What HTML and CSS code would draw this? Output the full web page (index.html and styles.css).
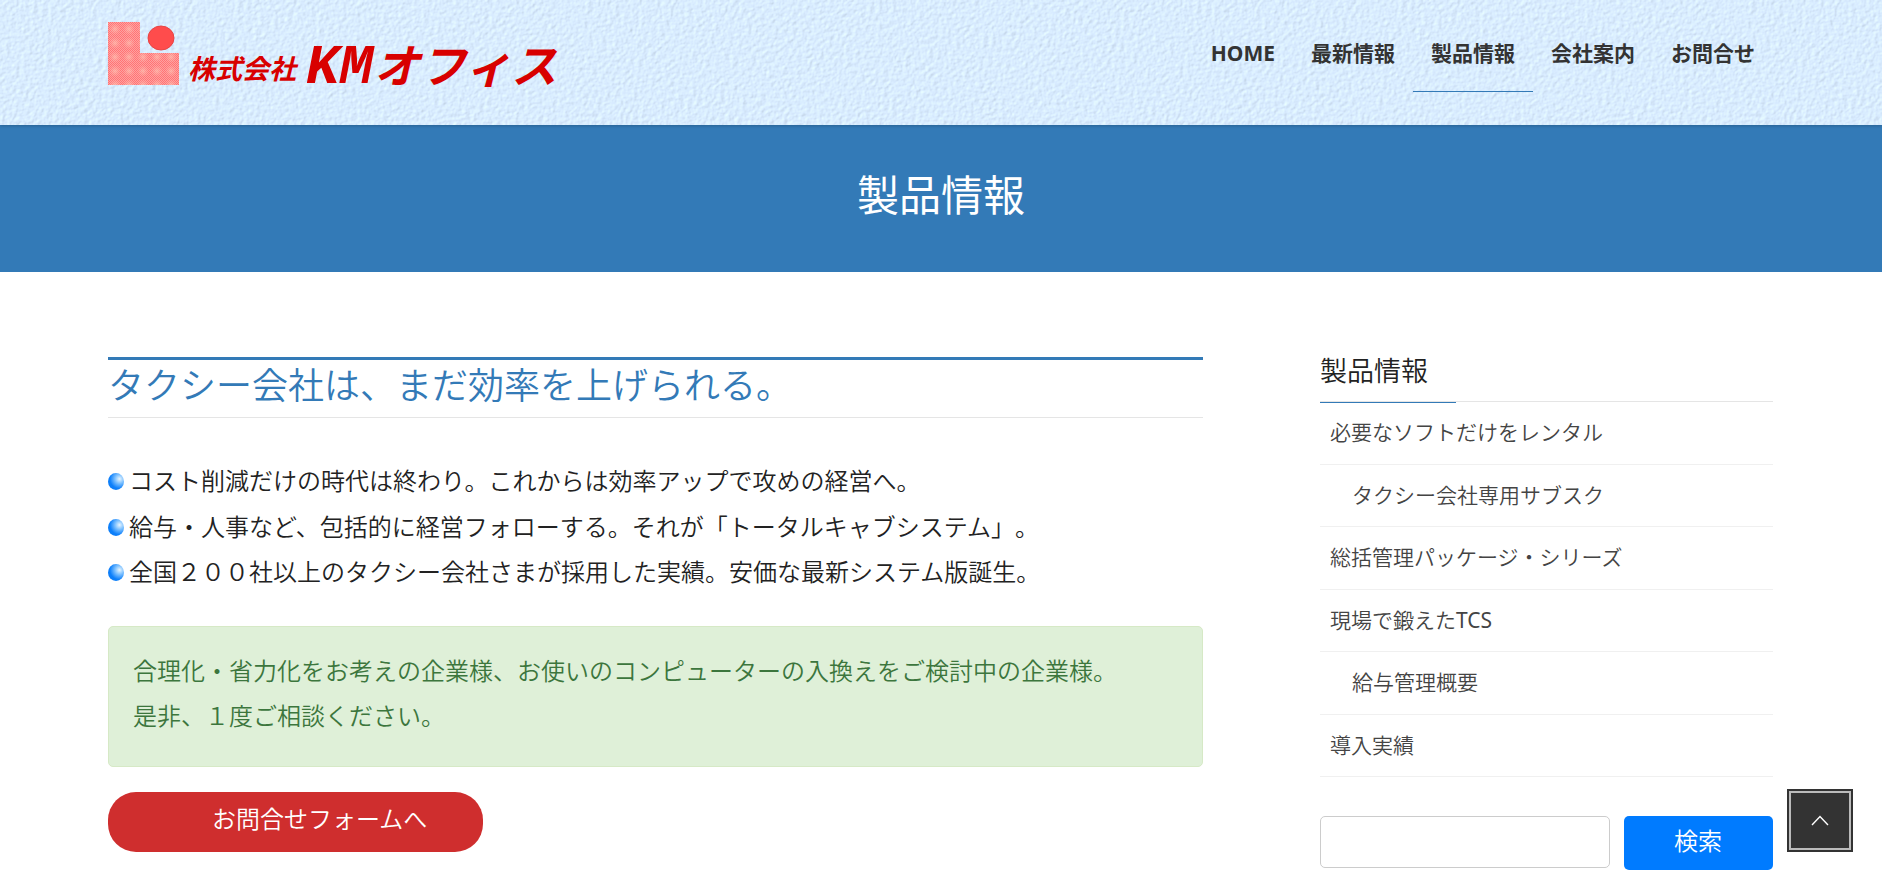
FILE: index.html
```html
<!DOCTYPE html>
<html lang="ja">
<head>
<meta charset="utf-8">
<meta name="viewport" content="width=device-width, initial-scale=1">
<title>製品情報 | 株式会社KMオフィス</title>
<link rel="stylesheet" href="styles.css">
</head>
<body>
<header class="site-header">
  <svg class="texture" aria-hidden="true">
    <filter id="paper" x="0" y="0" width="100%" height="100%" color-interpolation-filters="sRGB">
      <feTurbulence type="fractalNoise" baseFrequency="0.22 0.26" numOctaves="3" seed="4" result="n"/>
      <feDiffuseLighting in="n" surfaceScale="0.36" diffuseConstant="1.15" lighting-color="#d6e9fd">
        <feDistantLight azimuth="215" elevation="62"/>
      </feDiffuseLighting>
    </filter>
    <rect width="100%" height="100%" filter="url(#paper)"/>
  </svg>
  <a class="brand" href="#" aria-label="株式会社KMオフィス">
    <svg class="logo" viewBox="0 0 452 66" width="452" height="66">
      <defs>
        <pattern id="dots" width="2" height="2" patternUnits="userSpaceOnUse">
          <rect width="2" height="2" fill="#ffa0a0"/>
          <rect width="1" height="1" fill="#ff7474"/>
          <rect x="1" y="1" width="1" height="1" fill="#ff7474"/>
        </pattern>
        <radialGradient id="spot">
          <stop offset="0" stop-color="#ffc4b4" stop-opacity="0.7"/>
          <stop offset="1" stop-color="#ffb0a8" stop-opacity="0"/>
        </radialGradient>
        <pattern id="glow" width="14" height="14" patternUnits="userSpaceOnUse">
          <circle cx="7" cy="7" r="6" fill="url(#spot)"/>
        </pattern>
      </defs>
      <path d="M0 0H32V31H71V63H0Z" fill="url(#dots)"/>
      <path d="M0 0H32V31H71V63H0Z" fill="url(#glow)"/>
      <ellipse cx="53" cy="16" rx="13" ry="12" fill="#ff4c4c" stroke="#e84444" stroke-width="1"/>
      <text class="logo-small" x="80" y="57">株式会社</text>
      <text class="logo-latin" x="198" y="61">KM</text>
      <text class="logo-kana" x="266" y="61">オフィス</text>
    </svg>
  </a>
  <nav class="nav">
    <a href="#">HOME</a>
    <a href="#">最新情報</a>
    <a class="current" href="#">製品情報</a>
    <a href="#">会社案内</a>
    <a href="#">お問合せ</a>
  </nav>
</header>
<div class="banner"><h1>製品情報</h1></div>
<div class="content">
  <main>
    <h2 class="lead">タクシー会社は、まだ効率を上げられる。</h2>
    <ul class="points">
      <li>コスト削減だけの時代は終わり。これからは効率アップで攻めの経営へ。</li>
      <li>給与・人事など、包括的に経営フォローする。それが「トータルキャブシステム」。</li>
      <li>全国２００社以上のタクシー会社さまが採用した実績。安価な最新システム版誕生。</li>
    </ul>
    <p class="notice">合理化・省力化をお考えの企業様、お使いのコンピューターの入換えをご検討中の企業様。<br>是非、１度ご相談ください。</p>
    <a class="cta" href="#">お問合せフォームへ</a>
  </main>
  <aside>
    <h2 class="side-title"><span>製品情報</span></h2>
    <ul class="side-list">
      <li><a href="#">必要なソフトだけをレンタル</a></li>
      <li class="child"><a href="#">タクシー会社専用サブスク</a></li>
      <li><a href="#">総括管理パッケージ・シリーズ</a></li>
      <li><a href="#">現場で鍛えた<span class="latin">TCS</span></a></li>
      <li class="child"><a href="#">給与管理概要</a></li>
      <li><a href="#">導入実績</a></li>
    </ul>
    <form class="search">
      <input type="text" aria-label="検索キーワード">
      <button type="submit">検索</button>
    </form>
  </aside>
</div>
<a class="page-top" href="#" aria-label="ページの先頭へ">
  <svg viewBox="0 0 18 11" width="18" height="11"><path d="M1 10 9 1.500 17 10" fill="none" stroke="#fff" stroke-width="1.400"/></svg>
</a>
</body>
</html>
```

FILE: styles.css
```css
* { box-sizing: border-box; }

body {
  margin: 0;
  background: #fff;
  color: #222;
  font-family: "Noto Sans", "Noto Sans CJK JP", sans-serif;
  font-weight: 350;
  font-size: 24px;
  line-height: 1.9;
  text-spacing-trim: space-all;
}

h1, h2, p, ul { margin: 0; padding: 0; font-weight: 350; }
ul { list-style: none; }
a { color: inherit; text-decoration: none; }

.site-header {
  position: relative;
  display: flex;
  justify-content: space-between;
  align-items: flex-start;
  min-height: 125px;
  padding: 22px 109px 0 108px;
  background: #d8eafc;
  box-shadow: 0 1px 3px rgba(0, 0, 0, 0.2);
}

.texture {
  position: absolute;
  inset: 0;
  width: 100%;
  height: 100%;
}

.brand, .nav { position: relative; }
.logo { display: block; overflow: visible; }
.logo text { fill: #d80000; font-weight: 700; font-style: italic; }
.logo-small { font-family: "Noto Sans CJK JP", sans-serif; font-size: 27px; }
.logo-latin { font-family: "Liberation Mono", monospace; font-size: 56px; }
.logo-kana { font-family: "Noto Sans CJK JP", sans-serif; font-size: 46px; }

.nav { display: flex; }
.nav a {
  padding: 15px 18px 22px;
  border-bottom: 1px solid transparent;
  color: #333;
  font-size: 21px;
  font-weight: 700;
  line-height: 32px;
}
.nav .current { border-color: #337ab7; }

.banner {
  padding: 40px 108px 47px;
  background: #337ab7;
  color: #fff;
  text-align: center;
}
.banner h1 { font-size: 42px; font-weight: 400; line-height: 60px; }

.content {
  display: grid;
  grid-template-columns: minmax(0, 1095fr) minmax(0, 453fr);
  column-gap: 117px;
  padding: 85px 109px 0 108px;
}

.lead {
  padding: 2px 0 7px;
  border-top: 3px solid #337ab7;
  border-bottom: 1px solid #e5e5e5;
  color: #337ab7;
  font-size: 36px;
  line-height: 48px;
}

.points { margin: 40px 0 31px; }
.points li { display: flex; align-items: center; gap: 5px; }
.points li::before {
  content: "";
  flex: none;
  width: 16px;
  height: 17px;
  margin-top: 2px;
  border-radius: 50%;
  background: radial-gradient(circle at 72% 35%, #e8f6ff 0, #7cc0ff 28%, #0d80fb 60%, #0a78f0 100%);
}

.notice {
  padding: 21px 24px 27px;
  border: 1px solid #d6e9c6;
  border-radius: 5px;
  background: #dff0d8;
  color: #3c763d;
}

.cta {
  display: inline-block;
  margin-top: 25px;
  padding: 4px 56px 10px 104px;
  border-radius: 28px;
  background: #cf2e2e;
  color: #fff;
}

.side-title {
  padding: 0 0 16px;
  border-bottom: 1px solid #e5e5e5;
  font-size: 27px;
  line-height: 28px;
}
.side-title span {
  display: inline-block;
  margin-bottom: -18px;
  padding: 0 28px 17px 0;
  border-bottom: 1px solid #337ab7;
}

.side-list li {
  padding: 15px 10px;
  border-bottom: 1px solid #f0f0f0;
  color: #444;
  font-size: 21px;
  line-height: 1.5;
}
.side-list .child { padding-left: 32px; }
.side-list .latin { font-weight: 400; }

.search { display: flex; gap: 14px; align-items: flex-start; margin-top: 39px; }
.search input {
  flex: 1;
  min-width: 0;
  height: 52px;
  padding: 0 12px;
  border: 1px solid #ccc;
  border-radius: 5px;
  font: inherit;
}
.search button {
  flex: none;
  padding: 0 51px 4px 50px;
  border: 0;
  border-radius: 5px;
  background: #007bff;
  color: #fff;
  font: inherit;
  line-height: 50px;
}

.page-top {
  position: fixed;
  right: 29px;
  bottom: 18px;
  display: flex;
  align-items: center;
  justify-content: center;
  width: 66px;
  height: 63px;
  border: 1px solid #333;
  outline: 2px solid #bbb;
  outline-offset: -4px;
  background: #333;
}
```
